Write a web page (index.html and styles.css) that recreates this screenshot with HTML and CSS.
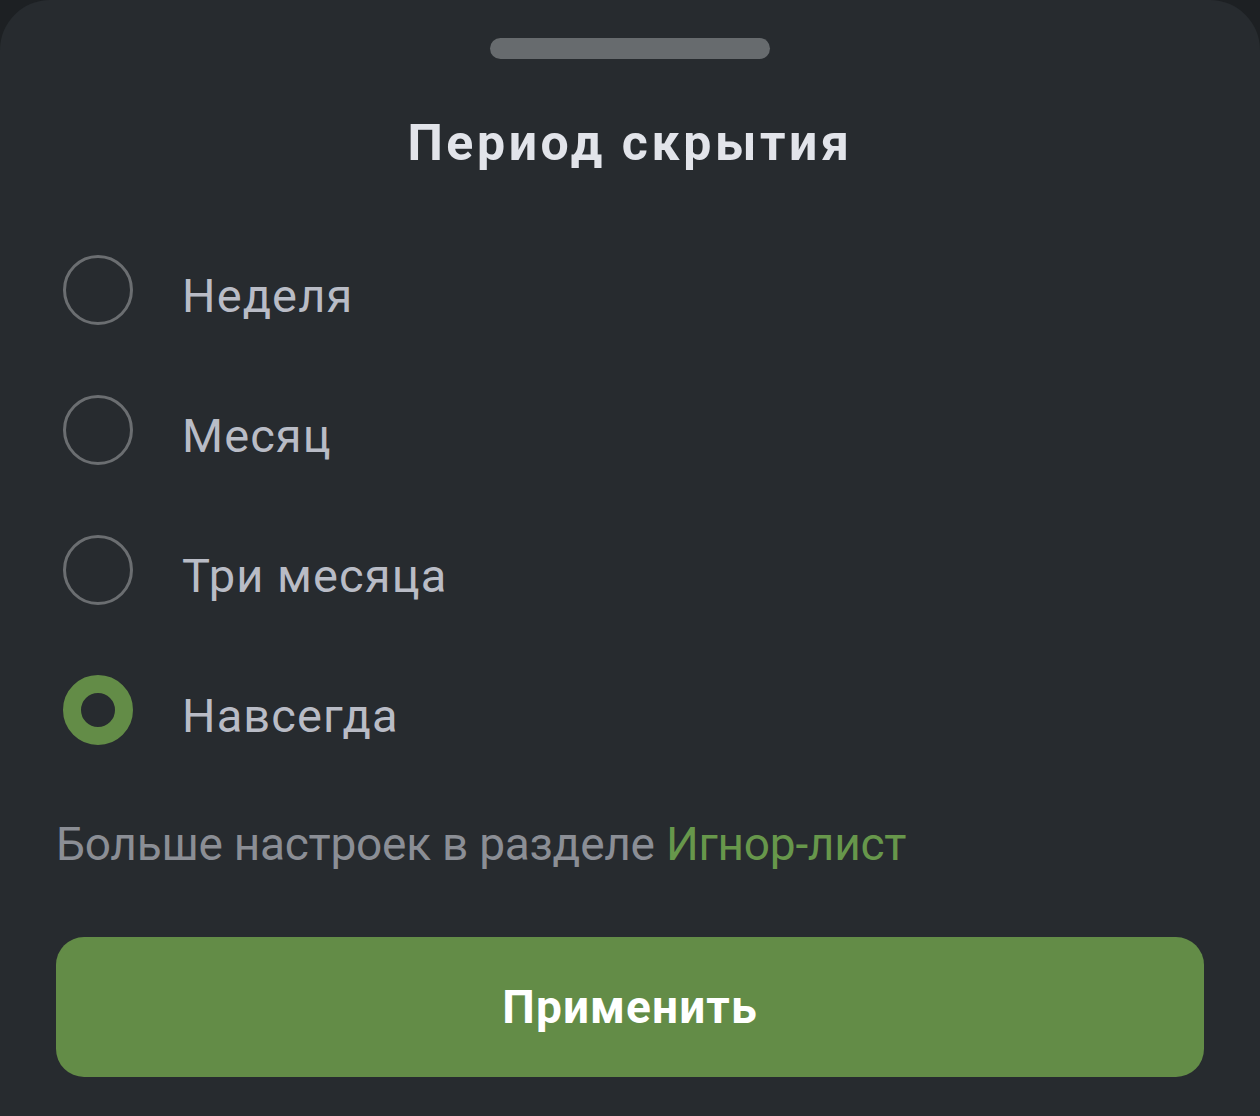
FILE: index.html
```html
<!DOCTYPE html>
<html lang="ru">
<head>
<meta charset="utf-8">
<title>Период скрытия</title>
<link rel="stylesheet" href="styles.css">
</head>
<body>
<div class="sheet">
  <div class="handle"></div>
  <h1 class="title">Период скрытия</h1>
  <ul class="options">
    <li class="option"><span class="radio"></span><span class="label">Неделя</span></li>
    <li class="option"><span class="radio"></span><span class="label">Месяц</span></li>
    <li class="option"><span class="radio"></span><span class="label">Три месяца</span></li>
    <li class="option"><span class="radio radio-on"></span><span class="label">Навсегда</span></li>
  </ul>
  <p class="hint">Больше настроек в разделе <span class="link">Игнор-лист</span></p>
  <button class="apply">Применить</button>
</div>
</body>
</html>
```

FILE: styles.css
```css
html, body {
  margin: 0;
  padding: 0;
  background: #1d2023;
  height: 100%;
}
body {
  font-family: Roboto, "Noto Sans", "Liberation Sans", sans-serif;
}
.sheet {
  background: #272b2f;
  border-radius: 50px 50px 0 0;
  min-height: 1116px;
  box-sizing: border-box;
  padding-top: 38px;
  display: flex;
  flex-direction: column;
}
.handle {
  width: 280px;
  height: 21px;
  border-radius: 11px;
  background: #676b6e;
  align-self: center;
}
.title {
  margin: 54px 0 0;
  font-size: 50px;
  line-height: 60px;
  font-weight: 700;
  letter-spacing: 3.6px;
  color: #e2e4ea;
  text-align: center;
}
.options {
  list-style: none;
  margin: 47px 0 0;
  padding: 0 0 0 63px;
}
.option {
  height: 140px;
  display: flex;
  align-items: center;
  gap: 49px;
}
.radio {
  width: 70px;
  height: 70px;
  box-sizing: border-box;
  border: 3px solid #6b6e71;
  border-radius: 50%;
  flex: none;
}
.radio-on {
  border: 18px solid #638c47;
}
.label {
  font-size: 47px;
  line-height: 56px;
  letter-spacing: 1.1px;
  color: #b9bcc6;
  margin-top: 12px;
}
.hint {
  margin: 36px 0 0;
  padding: 0 56px;
  font-size: 46px;
  line-height: 56px;
  letter-spacing: -0.25px;
  color: #8b8e95;
}
.link {
  color: #67974b;
}
.apply {
  margin: 65px 56px 0;
  height: 140px;
  border: none;
  border-radius: 28px;
  background: #638c47;
  color: #ffffff;
  font-family: Roboto, "Noto Sans", "Liberation Sans", sans-serif;
  font-size: 46px;
  font-weight: 700;
  letter-spacing: 1.1px;
  padding: 0;
}
```
